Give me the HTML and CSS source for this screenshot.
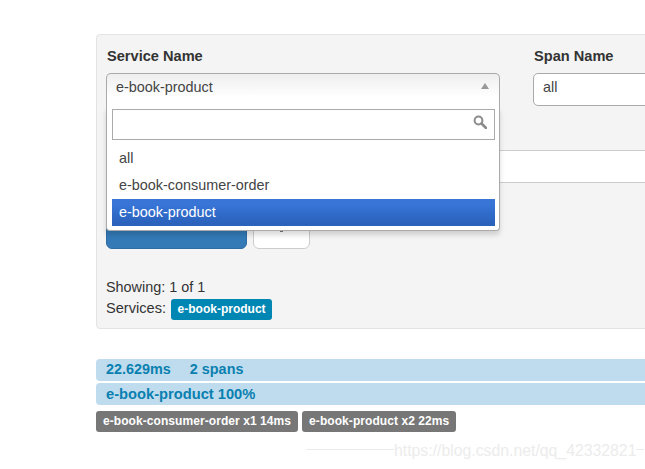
FILE: index.html
```html
<!DOCTYPE html>
<html lang="en">
<head>
<meta charset="utf-8">
<title>Zipkin</title>
<link rel="stylesheet" href="styles.css">
</head>
<body>
<main class="page">
  <section class="well">
    <div class="fields">
      <div class="field service">
        <label class="label">Service Name</label>
        <div class="chosen">
          <div class="chosen-single"><span>e-book-product</span><i class="arrow"></i></div>
          <div class="chosen-drop">
            <div class="search">
              <svg class="search-icon" viewBox="0 0 14 14" width="14" height="14" aria-hidden="true">
                <circle cx="5.5" cy="5.5" r="3.9" fill="none" stroke="#8c8c8c" stroke-width="2"/>
                <path d="M8.5 8.5L13 13" stroke="#8c8c8c" stroke-width="2.6" stroke-linecap="round"/>
              </svg>
            </div>
            <ul class="results">
              <li>all</li>
              <li>e-book-consumer-order</li>
              <li class="active">e-book-product</li>
            </ul>
          </div>
        </div>
      </div>
      <div class="field span-name">
        <label class="label">Span Name</label>
        <div class="text-input">all</div>
      </div>
    </div>
    <div class="wide-input"></div>
    <div class="buttons">
      <div class="btn primary"></div>
      <div class="btn plain"><i class="speck"></i></div>
    </div>
    <p class="line showing">Showing: 1 of 1</p>
    <p class="line services">Services: <span class="badge blue">e-book-product</span></p>
  </section>
  <section class="trace">
    <div class="bar first"><span class="duration">22.629ms</span><span>2 spans</span></div>
    <div class="bar second">e-book-product 100%</div>
    <div class="tags">
      <span class="badge gray">e-book-consumer-order x1 14ms</span>
      <span class="badge gray">e-book-product x2 22ms</span>
    </div>
  </section>
  <div class="watermark"><span class="rule left"></span><span class="mark">https://blog.csdn.net/qq_42332821</span><span class="rule right"></span></div>
</main>
</body>
</html>
```
FILE: styles.css
```css
* { box-sizing: border-box; }
html, body { margin: 0; height: 469px; overflow: hidden; background: #fff; }
body { font-family: "Liberation Sans", Arial, sans-serif; font-size: 14.4px; color: #333; }
.page { width: 645px; padding: 34px 0 0 96px; overflow: hidden; height: 469px; }

.well { width: 900px; height: 295px; background: #f4f4f4; border: 1px solid #e3e3e3; border-radius: 4px; padding: 11px 9px 0; }
.fields { display: flex; gap: 33px; height: 72px; }
.field { flex: none; }
.service { width: 394px; }
.span-name { width: 300px; }
.label { display: block; font-weight: bold; font-size: 14.6px; height: 27px; line-height: 20px; padding-left: 1px; }

.chosen { position: relative; height: 34px; }
.chosen-single { height: 34px; padding: 0 9px; line-height: 27px; border: 1px solid #aaa; border-bottom: 0; border-radius: 5px 5px 0 0; background: linear-gradient(#eeeeee 0, #fff 70%); color: #444; display: flex; justify-content: space-between; }
.arrow { width: 0; height: 0; margin: 9px 1px 0 0; border: 4.5px solid transparent; border-top: 0; border-bottom: 6px solid #999; }
.chosen-drop { position: absolute; z-index: 2; top: 34px; left: 0; width: 394px; height: 124px; background: #fff; border: 1px solid #aaa; border-top: 0; border-radius: 0 0 4px 4px; box-shadow: 0 4px 5px rgba(0,0,0,.15); padding: 2px 4px 0 5px; }
.search { height: 31px; border: 1px solid #aaa; background: #fff; display: flex; justify-content: flex-end; padding: 5px 7px 0 0; }
.results { list-style: none; margin: 5px 0 0; padding: 0; color: #444; }
.results li { height: 27px; line-height: 27px; padding-left: 7px; }
.results .active { color: #fff; background: linear-gradient(#3875d7 20%, #2a62bc 90%); }

.text-input { height: 33px; line-height: 27px; padding: 0 9px; background: #fff; border: 1px solid #aaa; border-radius: 5px; color: #444; }

.wide-input { height: 33px; margin-top: 32px; background: #fff; border: 1px solid #ccc; border-width: 1px 0 1px 1px; }
.buttons { display: flex; gap: 6px; height: 67px; }
.btn { height: 66px; border-radius: 0 0 6px 6px; }
.primary { width: 141px; background: #337ab7; border: 1px solid #2e6da4; }
.plain { width: 57px; background: #fff; border: 1px solid #ccc; display: flex; justify-content: center; align-items: flex-end; padding-bottom: 16px; }
.speck { width: 3px; height: 2px; background: #777; }

.line { margin: 0; color: #333; font-size: 14.6px; }
.showing { margin-top: 27px; line-height: 20px; font-size: 14.4px; }
.services { margin-top: 1px; line-height: 21px; height: 21px; }

.badge { display: inline-block; height: 21px; line-height: 20px; padding: 0 7px; border-radius: 3px; font-size: 12px; font-weight: bold; color: #fff; vertical-align: top; }
.blue { background: #0086b3; margin: 1px 0 0 1px; padding: 0 6.5px; }
.gray { background: #777; letter-spacing: 0.07px; }

.trace { margin-top: 30px; width: 900px; }
.bar { height: 22px; line-height: 21px; padding-left: 10px; margin-bottom: 2px; background: #bfdcee; border-radius: 4px; color: #0a80b0; font-weight: bold; }
.second { font-size: 14.7px; line-height: 22px; }
.duration { margin-right: 19px; }
.tags { display: flex; gap: 4px; margin-top: 6px; }

.watermark { margin-top: 7px; margin-left: 210px; width: 339px; display: flex; align-items: center; color: #ececec; font-size: 15.8px; }
.mark { flex: none; padding-top: 3px; }
.rule { flex: none; height: 1px; background: #ebebeb; }
.left { width: 88px; }
.right { width: 8px; }
```
